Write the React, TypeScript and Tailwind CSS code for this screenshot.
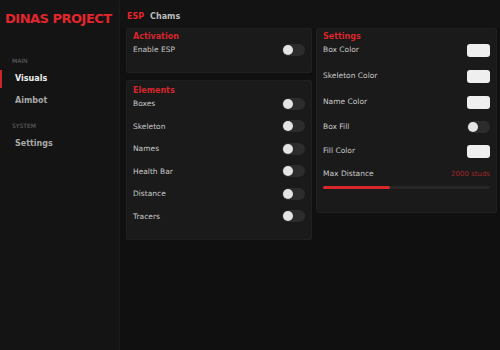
import React from "react";

const font = { fontFamily: '"DejaVu Sans", "Liberation Sans", sans-serif' };

function Toggle() {
  return (
    <div className="w-[23px] h-[12px] rounded-full bg-[#2c2c2c] flex items-center px-[1px]">
      <div className="w-[10px] h-[10px] rounded-full bg-[#e4e4e4]" />
    </div>
  );
}

function Swatch() {
  return <div className="w-[23px] h-[13px] rounded-[3px] bg-[#efefef]" />;
}

function Row({ label, children, h }: { label: string; children: React.ReactNode; h: string }) {
  return (
    <div className={`flex items-center justify-between ${h}`}>
      <span className="text-[7.5px] text-[#c8c8c8]">{label}</span>
      {children}
    </div>
  );
}

function Heading({ children }: { children: React.ReactNode }) {
  return <div className="text-[8px] font-bold text-[#d8262c] leading-[10px]">{children}</div>;
}

export default function App() {
  const elements = ["Boxes", "Skeleton", "Names", "Health Bar", "Distance", "Tracers"];

  return (
    <div className="w-[500px] h-[350px] flex bg-[#101010] overflow-hidden" style={font}>
      {/* sidebar */}
      <div className="w-[120px] h-full bg-[#141414] border-r border-[#1b1b1b] flex flex-col">
        <div className="pl-[5px] pt-[11px] h-[50px]">
          <div className="text-[13px] font-bold text-[#e3262d] tracking-[-0.5px] leading-[16px]">
            DINAS PROJECT
          </div>
        </div>
        <div className="pl-[12px] text-[6px] text-[#6a6a6a] leading-[8px] mt-[7px]">MAIN</div>
        <div className="relative flex items-center h-[18px] mt-[5px]">
          <div className="absolute left-0 top-0 w-[2px] h-full bg-[#c9252b]" />
          <span className="pl-[15px] text-[8px] font-bold text-[#f0f0f0]">Visuals</span>
        </div>
        <div className="flex items-center h-[18px] mt-[4px]">
          <span className="pl-[15px] text-[8px] font-bold text-[#a8a8a8]">Aimbot</span>
        </div>
        <div className="pl-[12px] text-[6px] text-[#6a6a6a] leading-[8px] mt-[12px]">SYSTEM</div>
        <div className="flex items-center h-[18px] mt-[5px]">
          <span className="pl-[15px] text-[8px] font-bold text-[#a8a8a8]">Settings</span>
        </div>
      </div>

      {/* main */}
      <div className="flex-1 flex flex-col pl-[6px]">
        <div className="h-[28px] flex items-center gap-[6px] pt-[6px] bg-[#131313] -ml-[6px] pl-[7px]">
          <span className="text-[8px] font-bold text-[#e3262d]">ESP</span>
          <span className="text-[8px] font-bold text-[#bdbdbd]">Chams</span>
        </div>
        <div className="flex gap-[4px]">
          <div className="w-[186px] flex flex-col gap-[7px]">
            <div className="h-[45px] bg-[#1a1a1a] border border-[#202020] rounded-[2px] px-[6px] pt-[3px]">
              <Heading>Activation</Heading>
              <Row label="Enable ESP" h="h-[16px]">
                <Toggle />
              </Row>
            </div>
            <div className="h-[160px] bg-[#1a1a1a] border border-[#202020] rounded-[2px] px-[6px] pt-[5px]">
              <Heading>Elements</Heading>
              <div className="-mt-[3.5px]">
                {elements.map((e) => (
                  <Row key={e} label={e} h="h-[22.5px]">
                    <Toggle />
                  </Row>
                ))}
              </div>
            </div>
          </div>
          <div className="w-[181px] h-[185px] bg-[#1a1a1a] border border-[#202020] rounded-[2px] px-[6px] pt-[3px] flex flex-col">
            <Heading>Settings</Heading>
            <Row label="Box Color" h="h-[26px] -mt-[5px]">
              <Swatch />
            </Row>
            <Row label="Skeleton Color" h="h-[26px]">
              <Swatch />
            </Row>
            <Row label="Name Color" h="h-[26px]">
              <Swatch />
            </Row>
            <Row label="Box Fill" h="h-[24px]">
              <Toggle />
            </Row>
            <Row label="Fill Color" h="h-[24px]">
              <Swatch />
            </Row>
            <div className="flex items-center justify-between h-[22px]">
              <span className="text-[7.5px] text-[#c8c8c8]">Max Distance</span>
              <span className="text-[7px] text-[#a3252a]">2000 studs</span>
            </div>
            <div className="h-[3px] bg-[#262626] rounded-full mt-[1px]">
              <div className="h-full w-[40%] bg-[#d7262c] rounded-full" />
            </div>
          </div>
        </div>
      </div>
    </div>
  );
}
